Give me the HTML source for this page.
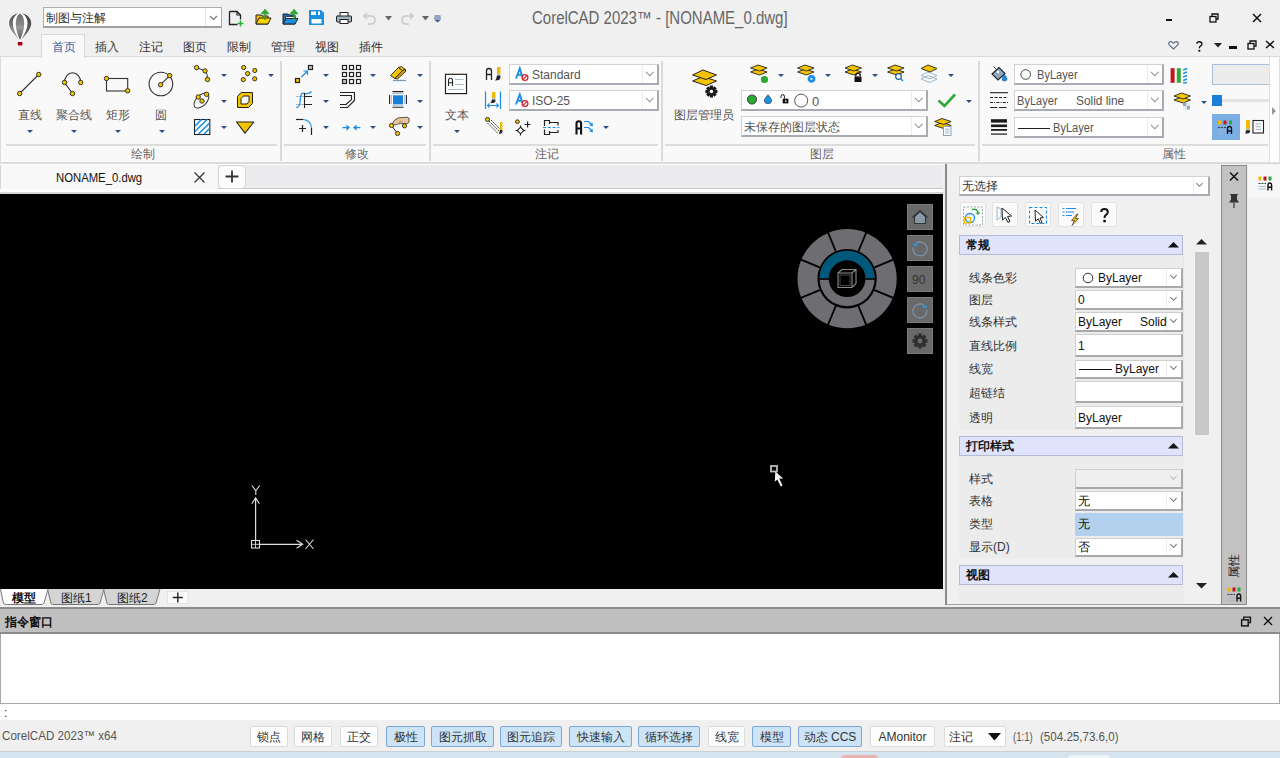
<!DOCTYPE html>
<html><head><meta charset="utf-8">
<style>
*{box-sizing:border-box;margin:0;padding:0}
html,body{width:1280px;height:758px;overflow:hidden;background:#f0f0f0;font-family:"Liberation Sans",sans-serif;font-size:13px;color:#222}
.a{position:absolute}
.t{position:absolute;white-space:nowrap;line-height:1}
svg{position:absolute;overflow:visible}
.dd{position:absolute;width:0;height:0;border-left:3px solid transparent;border-right:3px solid transparent;border-top:3px solid #2e4e8a}
.cb{position:absolute;background:#fff;border:1px solid #d2d2d2;border-right:2px solid #a8abb2;border-bottom:2px solid #a8abb2}
.cbd{position:absolute;width:1px;background:#ececec}
.chev{position:absolute;width:5.5px;height:5.5px;border-right:1px solid #808080;border-bottom:1px solid #808080;transform:rotate(45deg)}
.lbl{position:absolute;white-space:nowrap;line-height:1;color:#555;font-size:11.8px}
.grp{position:absolute;white-space:nowrap;line-height:1;color:#666;font-size:11.8px}

</style></head><body>
<!-- title bar -->
<div class="a" style="left:0;top:0;width:1280px;height:57px;background:#f0f0f0"></div>
<!-- ribbon body -->
<div class="a" style="left:0;top:56px;width:1280px;height:108px;background:#f9f9f9;border-top:1px solid #d9d9d9;border-bottom:2px solid #dcdcdc;border-left:1px solid #dcdcdc"></div>

<!-- logo -->
<svg style="left:8px;top:12px" width="26" height="34" viewBox="0 0 26 34">
<defs><linearGradient id="lg1" x1="0" y1="0" x2="0" y2="1"><stop offset="0" stop-color="#4a4a4a"/><stop offset="1" stop-color="#b0b0b0"/></linearGradient>
<linearGradient id="lg2" x1="0" y1="0" x2="0" y2="1"><stop offset="0" stop-color="#6a6a6a"/><stop offset="0.45" stop-color="#8c8c8c"/><stop offset="0.5" stop-color="#9c9c9c"/><stop offset="1" stop-color="#5a5a5a"/></linearGradient>
<linearGradient id="lg3" x1="0" y1="0" x2="0" y2="1"><stop offset="0" stop-color="#3a3a3a"/><stop offset="1" stop-color="#7a7a7a"/></linearGradient></defs>
<path d="M12 0.8 C5 0.8 0.5 6 0.5 11.5 C0.5 17.5 7 23 11.5 28.5 L12.5 28.5 C17 23 23.8 17.5 23.8 11.5 C23.8 6 19 0.8 12 0.8Z" fill="#fff"/>
<path d="M10.5 1.3 C5 2 1 6.5 1 11.5 C1 16.5 6 22 11.2 28 C7.5 22 4.8 16.5 4.8 11 C4.8 6.5 7 3 10.5 1.3Z" fill="url(#lg1)"/>
<path d="M12 1.5 C9 3 7.8 7.5 7.8 12 C7.8 18 10 23.5 12 28 C14 23.5 16.2 18 16.2 12 C16.2 7.5 15 3 12 1.5Z" fill="url(#lg2)"/>
<path d="M13.8 1.3 C19 2 23.3 6.5 23.3 11.5 C23.3 16.5 18.5 22 13 28 C16.8 22 19.5 16.5 19.5 11 C19.5 6.5 17.5 3 13.8 1.3Z" fill="url(#lg3)"/>
<rect x="9.8" y="30" width="4.6" height="3.4" rx="0.6" fill="#a00010"/>
</svg>
<!-- workspace combo -->
<div class="a" style="left:43px;top:7px;width:179px;height:21px;background:#fff;border:1px solid #adadad;border-bottom:2px solid #a0a0a0"></div>
<div class="a" style="left:205px;top:8px;width:1px;height:18px;background:#e8e8e8"></div>
<svg style="left:209px;top:15px" width="9" height="6"><path d="M1 1 L4.5 4.5 L8 1" stroke="#777" fill="none" stroke-width="1.1"/></svg>
<div class="t" style="left:46px;top:12px;font-size:11.6px;color:#333">制图与注解</div>
<!-- QAT icons -->
<svg style="left:228px;top:10px" width="17" height="17" viewBox="0 0 17 17">
<path d="M1.5 1.5 H9 L12.5 5 V9.5 M9.5 14.5 H1.5 V1.5" fill="none" stroke="#222" stroke-width="1.3"/>
<path d="M9 1.5 V5 H12.5" fill="none" stroke="#222" stroke-width="1.2"/>
<path d="M12.5 10.5 V16.5 M9.5 13.5 H15.5" stroke="#2ea836" stroke-width="1.5"/>
</svg>
<svg style="left:255px;top:9px" width="17" height="17" viewBox="0 0 17 17">
<path d="M1 6 H6 L7 7 H13 V15 H1Z" fill="#f5b800" stroke="#222" stroke-width="1"/>
<path d="M1 15 L4 9 H16 L13 15Z" fill="#ffd200" stroke="#222" stroke-width="1"/>
<path d="M10 11 V3 M7 4.5 L10 1 L13 4.5Z" stroke="#2ea836" fill="#2ea836" stroke-width="1.6"/>
</svg>
<svg style="left:282px;top:9px" width="17" height="17" viewBox="0 0 17 17">
<path d="M1 5 H6 L7 6 H13 V15 H1Z" fill="#1f6fbf" stroke="#222" stroke-width="1"/>
<path d="M3.5 7.5 H13 V12 H3.5Z" fill="#fff" stroke="#222" stroke-width="0.8"/>
<path d="M1 15 L4 9.5 H16 L13 15Z" fill="#1b8fe0" stroke="#222" stroke-width="1"/>
<path d="M12 11 V3 M9 4.5 L12 1 L15 4.5Z" stroke="#2ea836" fill="#2ea836" stroke-width="1.6"/>
</svg>
<svg style="left:309px;top:10px" width="16" height="16" viewBox="0 0 16 16">
<path d="M0 0 H12 L15 3 V15 H0Z" fill="#1b8fe0"/>
<rect x="2" y="1.5" width="5" height="3.5" fill="#fff"/><rect x="9" y="1.5" width="2" height="3.5" fill="#fff"/>
<rect x="2.5" y="9" width="10" height="4.5" fill="#fff"/>
</svg>
<svg style="left:336px;top:12px" width="16" height="12" viewBox="0 0 16 12">
<rect x="4" y="0.5" width="8" height="4" fill="#fff" stroke="#222" stroke-width="1"/>
<path d="M1 4 H15 Q15.5 4 15.5 5 V9 Q15.5 10 14.5 10 H1.5 Q0.5 10 0.5 9 V5 Q0.5 4 1.5 4Z" fill="#9fb3bf" stroke="#222" stroke-width="1"/>
<rect x="4" y="7.5" width="8" height="4" fill="#fff" stroke="#222" stroke-width="1"/>
</svg>
<svg style="left:363px;top:12px" width="13" height="13" viewBox="0 0 13 13">
<path d="M4 1 L1 4 L4 7 M1 4 H8 Q12 4 12 8 Q12 12 8 12 H5" fill="none" stroke="#c8c8c8" stroke-width="1.5"/>
</svg>
<svg style="left:385px;top:16px" width="7" height="5"><path d="M0 0 H7 L3.5 4.5Z" fill="#666"/></svg>
<svg style="left:401px;top:12px" width="13" height="13" viewBox="0 0 13 13">
<path d="M9 1 L12 4 L9 7 M12 4 H5 Q1 4 1 8 Q1 12 5 12 H8" fill="none" stroke="#c8c8c8" stroke-width="1.5"/>
</svg>
<svg style="left:422px;top:16px" width="7" height="5"><path d="M0 0 H7 L3.5 4.5Z" fill="#666"/></svg>
<svg style="left:434px;top:15px" width="7" height="8"><path d="M0.5 1 H6.5" stroke="#3b5a8c" stroke-width="1"/><path d="M0 3 H7" stroke="#3b5a8c" stroke-width="1"/><path d="M0 4.5 H7 L3.5 7.5Z" fill="#3b5a8c"/></svg>
<!-- title -->
<div class="t" style="left:532px;top:10px;font-size:17.5px;color:#666;transform-origin:0 0;transform:scaleX(0.856)">CorelCAD 2023™ - [NONAME_0.dwg]</div>
<!-- window controls -->
<div class="a" style="left:1166px;top:19px;width:6px;height:2px;background:#111"></div>
<svg style="left:1209px;top:13px" width="10" height="10" viewBox="0 0 10 10"><path d="M3 3 V1 H9 V6 H7" fill="none" stroke="#111" stroke-width="1.3"/><rect x="1" y="3.5" width="6" height="5.5" fill="none" stroke="#111" stroke-width="1.3"/></svg>
<svg style="left:1252px;top:13px" width="10" height="10" viewBox="0 0 10 10"><path d="M1 1 L9 9 M9 1 L1 9" stroke="#111" stroke-width="1.5"/></svg>
<!-- row 2 right controls -->
<svg style="left:1168px;top:41px" width="11" height="9" viewBox="0 0 11 9"><path d="M5.5 8 L1.2 3.8 Q0 2.5 1 1.3 Q2.5 0 4 1 L5.5 2.3 L7 1 Q8.5 0 10 1.3 Q11 2.5 9.8 3.8Z" fill="none" stroke="#5a6c80" stroke-width="1.1"/></svg>
<svg style="left:1196px;top:41px" width="7" height="11"><path d="M0.8 2.8 Q0.8 0.7 3.3 0.7 Q5.9 0.7 5.9 2.9 Q5.9 4.3 4.4 5.2 Q3.3 5.9 3.3 7.3" fill="none" stroke="#111" stroke-width="1.4"/><rect x="2.4" y="8.8" width="1.9" height="1.9" fill="#111"/></svg>
<svg style="left:1214px;top:43px" width="8" height="5"><path d="M0 0 H8 L4 4.5Z" fill="#222"/></svg>
<div class="a" style="left:1229px;top:46px;width:8px;height:2.5px;background:#111"></div>
<svg style="left:1247px;top:40px" width="10" height="10" viewBox="0 0 10 10"><path d="M3 3 V1 H9 V6 H7" fill="none" stroke="#111" stroke-width="1.3"/><rect x="1" y="3.5" width="6" height="5.5" fill="none" stroke="#111" stroke-width="1.3"/></svg>
<svg style="left:1265px;top:40px" width="10" height="9" viewBox="0 0 10 9"><path d="M1 1 L9 8 M9 1 L1 8" stroke="#111" stroke-width="1.4"/></svg>
<!-- ribbon tabs -->
<div class="a" style="left:41px;top:34px;width:44px;height:24px;background:#f9f9f9;border:1px solid #d9d9d9;border-bottom:none"></div>
<div class="t" style="left:52px;top:41px;font-size:12px;color:#3a5f9e">首页</div>
<div class="t" style="left:95px;top:41px;font-size:12px;color:#333">插入</div>
<div class="t" style="left:139px;top:41px;font-size:12px;color:#333">注记</div>
<div class="t" style="left:183px;top:41px;font-size:12px;color:#333">图页</div>
<div class="t" style="left:227px;top:41px;font-size:12px;color:#333">限制</div>
<div class="t" style="left:271px;top:41px;font-size:12px;color:#333">管理</div>
<div class="t" style="left:315px;top:41px;font-size:12px;color:#333">视图</div>
<div class="t" style="left:359px;top:41px;font-size:12px;color:#333">插件</div>

<!-- RIBBON -->
<div class="a" style="left:280px;top:61px;width:2px;height:100px;background:#dadada"></div>
<div class="a" style="left:429px;top:61px;width:2px;height:100px;background:#dadada"></div>
<div class="a" style="left:661px;top:61px;width:2px;height:100px;background:#dadada"></div>
<div class="a" style="left:978px;top:61px;width:2px;height:100px;background:#dadada"></div>
<div class="a" style="left:6px;top:144px;width:271px;height:2px;background:#dcdcdc"></div>
<div class="a" style="left:284px;top:144px;width:142px;height:2px;background:#dcdcdc"></div>
<div class="a" style="left:433px;top:144px;width:225px;height:2px;background:#dcdcdc"></div>
<div class="a" style="left:665px;top:144px;width:310px;height:2px;background:#dcdcdc"></div>
<div class="a" style="left:982px;top:144px;width:286px;height:2px;background:#dcdcdc"></div>
<div class="a" style="left:1269px;top:57px;width:11px;height:106px;background:#fdfdfd;border-left:1px solid #dedede;border-right:1px solid #dedede;border-bottom:1px solid #dedede"></div>
<svg style="left:1272px;top:107px" width="5" height="8"><path d="M0 0 L4 4 L0 8Z" fill="#999"/></svg>
<div class="grp" style="left:131px;top:149px">绘制</div>
<div class="grp" style="left:345px;top:149px">修改</div>
<div class="grp" style="left:535px;top:149px">注记</div>
<div class="grp" style="left:810px;top:149px">图层</div>
<div class="grp" style="left:1162px;top:149px">属性</div>
<svg style="left:0;top:0" width="280" height="140"><path d="M19.7 93.5 L38.7 74.5" stroke="#333" stroke-width="1.1"/><circle cx="19.7" cy="93.5" r="2.2" fill="#f5c400" stroke="#222" stroke-width="0.9"/><circle cx="38.7" cy="74.5" r="2.2" fill="#f5c400" stroke="#222" stroke-width="0.9"/><path d="M72.5 93.5 L64.5 82.5 A8.1 9.8 0 0 1 80.7 82.5" stroke="#333" stroke-width="1.1" fill="none"/><circle cx="64.5" cy="82.5" r="2.2" fill="#f5c400" stroke="#222" stroke-width="0.9"/><circle cx="72.5" cy="93.5" r="2.2" fill="#f5c400" stroke="#222" stroke-width="0.9"/><circle cx="80.7" cy="82.5" r="2.2" fill="#f5c400" stroke="#222" stroke-width="0.9"/><rect x="106.5" y="78.5" width="21.2" height="12.5" fill="none" stroke="#333" stroke-width="1.1"/><circle cx="106.5" cy="78.5" r="2.2" fill="#f5c400" stroke="#222" stroke-width="0.9"/><circle cx="127.7" cy="90.8" r="2.2" fill="#f5c400" stroke="#222" stroke-width="0.9"/><circle cx="160.9" cy="84" r="11.8" fill="none" stroke="#333" stroke-width="1.1"/><path d="M160.6 84.7 L169.7 75.6" stroke="#333" stroke-width="1.1"/><circle cx="160.6" cy="84.7" r="2.2" fill="#f5c400" stroke="#222" stroke-width="0.9"/><circle cx="169.7" cy="75.6" r="2.2" fill="#f5c400" stroke="#222" stroke-width="0.9"/><path d="M196.6 67.6 L205 70.9 Q208 74 207.5 79.5" stroke="#333" stroke-width="1" fill="none"/><circle cx="196.6" cy="67.6" r="2.2" fill="#f5c400" stroke="#222" stroke-width="0.9"/><circle cx="205" cy="70.9" r="2.2" fill="#f5c400" stroke="#222" stroke-width="0.9"/><circle cx="207.5" cy="79.5" r="2.2" fill="#f5c400" stroke="#222" stroke-width="0.9"/><circle cx="243.7" cy="67.5" r="2.1" fill="#f5c400" stroke="#222" stroke-width="0.9"/><circle cx="254.8" cy="70.5" r="2.1" fill="#f5c400" stroke="#222" stroke-width="0.9"/><circle cx="247.6" cy="73.6" r="2.1" fill="#f5c400" stroke="#222" stroke-width="0.9"/><circle cx="243.3" cy="79.6" r="2.1" fill="#f5c400" stroke="#222" stroke-width="0.9"/><circle cx="254.7" cy="78.8" r="2.1" fill="#f5c400" stroke="#222" stroke-width="0.9"/><ellipse cx="201.4" cy="100.6" rx="9.2" ry="5.2" transform="rotate(-45 201.4 100.6)" fill="none" stroke="#333" stroke-width="1"/><circle cx="198.2" cy="97" r="2.2" fill="#f5c400" stroke="#222" stroke-width="0.9"/><circle cx="206.6" cy="94.3" r="2.2" fill="#f5c400" stroke="#222" stroke-width="0.9"/><circle cx="202" cy="101" r="2.2" fill="#f5c400" stroke="#222" stroke-width="0.9"/><path d="M241 92.5 H252.5 V103.5 L248.5 107.5 H237.5 V96.5Z M243.5 96 H249 V101.5 L247 104 H241 V98.5Z" fill="#f5c400" fill-rule="evenodd" stroke="#222" stroke-width="1"/><rect x="194.5" y="119.5" width="15.3" height="15" fill="#fff" stroke="#222" stroke-width="1.1"/><path d="M195 126 L201.5 119.5 M195 131.5 L207 119.5 M198.5 134 L209.3 123.3 M204 134 L209.3 128.7" stroke="#1a8fe3" stroke-width="1.6"/><path d="M236.5 122 H253.8 L245 133.2Z" fill="#f5c400" stroke="#222" stroke-width="1.1" stroke-linejoin="round"/></svg>
<div class="lbl" style="left:18px;top:110px">直线</div>
<div class="lbl" style="left:56px;top:110px">聚合线</div>
<div class="lbl" style="left:106px;top:110px">矩形</div>
<div class="lbl" style="left:155px;top:110px">圆</div>
<div class="dd" style="left:27px;top:130px"></div>
<div class="dd" style="left:71px;top:130px"></div>
<div class="dd" style="left:115px;top:130px"></div>
<div class="dd" style="left:159px;top:130px"></div>
<div class="dd" style="left:221px;top:74px"></div>
<div class="dd" style="left:268px;top:74px"></div>
<div class="dd" style="left:221px;top:100px"></div>
<div class="dd" style="left:221px;top:126px"></div>
<svg style="left:0;top:0" width="430" height="140"><rect x="295.5" y="78.5" width="4" height="4" fill="#f5c400" stroke="#222" stroke-width="1.2"/><rect x="308.5" y="65.5" width="4" height="4" fill="#b9cdd6" stroke="#222" stroke-width="1.2"/><path d="M301.5 77 L307 71.5 M303.5 71 H307.5 V75" stroke="#1a8fe3" stroke-width="1.2" fill="none"/><rect x="342.5" y="65.5" width="4" height="4" fill="#fff" stroke="#222" stroke-width="1.2"/><rect x="349.5" y="65.5" width="4" height="4" fill="#fff" stroke="#222" stroke-width="1.2"/><rect x="356.5" y="65.5" width="4" height="4" fill="#fff" stroke="#222" stroke-width="1.2"/><rect x="342.5" y="72.5" width="4" height="4" fill="#fff" stroke="#222" stroke-width="1.2"/><rect x="349.5" y="72.5" width="4" height="4" fill="#fff" stroke="#222" stroke-width="1.2"/><rect x="356.5" y="72.5" width="4" height="4" fill="#fff" stroke="#222" stroke-width="1.2"/><rect x="342.5" y="79.5" width="4" height="4" fill="#b9cdd6" stroke="#222" stroke-width="1.2"/><rect x="349.5" y="79.5" width="4" height="4" fill="#fff" stroke="#222" stroke-width="1.2"/><rect x="356.5" y="79.5" width="4" height="4" fill="#fff" stroke="#222" stroke-width="1.2"/><path d="M390.5 75.5 L398.5 67.5 L402.5 70.5 L395 78.5Z" fill="#f5c400" stroke="#222" stroke-width="0.9" stroke-linejoin="round"/><path d="M398.5 67.5 L401.5 66.5 L405.5 69.5 L402.5 70.5Z" fill="#f5c400" stroke="#222" stroke-width="0.9" stroke-linejoin="round"/><path d="M402.5 70.5 L405.5 69.5 L405.5 71.5 L397.5 79 L395 78.5Z" fill="#d9a300" stroke="#222" stroke-width="0.9" stroke-linejoin="round"/><path d="M393 80.5 H406" stroke="#7d9ab3" stroke-width="1.3"/><path d="M296 96.5 H304 M296 104.5 H304" stroke="#a8bccb" stroke-width="1"/><path d="M296 107.5 Q299.5 107.5 300 102 Q300.5 95 302 93.5 Q303.5 92.5 306 93.8 Q309 94 311.5 91.5" stroke="#1a8fe3" stroke-width="1.2" fill="none"/><path d="M304.5 93 V108 M304.5 96.5 H312 M304.5 104.5 H312" stroke="#222" stroke-width="1.1" fill="none"/><path d="M340 92.5 H354.5 V100.5 L347.5 107.5 H340 M340 95.5 H351.5 V99.5 L346 104.5 H340" stroke="#222" stroke-width="1.1" fill="none"/><path d="M392.5 91.6 H403.5 M392.5 107.2 H403.5 M389.6 95 V104 M406.4 95 V104" stroke="#222" stroke-width="1.1"/><path d="M392.5 93.5 H403.5 M392.5 105.3 H403.5 M391.5 95 V104 M404.5 95 V104" stroke="#9ab6cf" stroke-width="0.8"/><rect x="393" y="95.3" width="10" height="9" fill="#1a7fd6"/><path d="M296 119.5 H303 Q311 120 311.5 128" stroke="#1a8fe3" stroke-width="1.2" fill="none"/><path d="M296 119.5 H303" stroke="#222" stroke-width="1.2"/><path d="M311.5 128 V135" stroke="#222" stroke-width="1.2"/><path d="M299 128.5 H306 M302.5 125 V132" stroke="#222" stroke-width="1.2"/><path d="M342.5 127.6 H348 M360.5 127.6 H355" stroke="#1a8fe3" stroke-width="1.3"/><path d="M346.5 124.5 L350 127.6 L346.5 130.7Z M356.5 124.5 L353 127.6 L356.5 130.7Z" fill="#1a8fe3"/><path d="M391.5 125.5 L397.5 133.5" stroke="#333" stroke-width="1"/><path d="M392 124.5 Q393.5 119.5 398.5 117.8 L407 117.2 Q409.6 117.6 409.2 120 L408.8 122.6 Q407.5 124 404.5 123.6 L400.5 123.6 Q397.5 124 395 125Z" fill="#e8c49a" stroke="#333" stroke-width="0.8"/><path d="M399 121.5 L403 121.3 M398.5 123 L401 123" stroke="#a08060" stroke-width="0.6"/><circle cx="391.5" cy="125.5" r="2.1" fill="#f5c400" stroke="#222" stroke-width="0.9"/><circle cx="404.5" cy="125.8" r="2.1" fill="#f5c400" stroke="#222" stroke-width="0.9"/><circle cx="397.5" cy="133.5" r="2.1" fill="#f5c400" stroke="#222" stroke-width="0.9"/></svg>
<div class="dd" style="left:323px;top:74px"></div>
<div class="dd" style="left:370px;top:74px"></div>
<div class="dd" style="left:417px;top:74px"></div>
<div class="dd" style="left:323px;top:100px"></div>
<div class="dd" style="left:417px;top:100px"></div>
<div class="dd" style="left:323px;top:126px"></div>
<div class="dd" style="left:370px;top:126px"></div>
<div class="dd" style="left:417px;top:126px"></div>
<svg style="left:0;top:0" width="662" height="140"><rect x="445.5" y="74.3" width="21" height="19.3" fill="#fff" stroke="#222" stroke-width="1.2"/><path d="M448.5 86 V80.3 Q448.5 78.3 450.5 78.3 Q452.5 78.3 452.5 80.3 V86 M448.5 82.8 H452.5" stroke="#222" stroke-width="1.1" fill="none"/><path d="M455 79.5 H463.5 M455 84.5 H463.5 M448 89.5 H463.5" stroke="#9bb8c8" stroke-width="0.9"/><path d="M486.5 80 V71 Q486.5 68.5 489 68.5 Q491.5 68.5 491.5 71 V80 M486.5 74.5 H491.5" stroke="#222" stroke-width="1.3" fill="none"/><rect x="497" y="67" width="3.4" height="7" fill="#f5b800"/><rect x="497" y="74" width="3.4" height="1.5" fill="#a8c8d8"/><path d="M497 75.5 H500.4 V78 Q500 80.5 495 80.5 Q496.5 79 497 75.5Z" fill="#222"/><path d="M485.5 91.5 V109 M500.5 91.5 V109" stroke="#1a8fe3" stroke-width="1.2"/><path d="M487.5 105.5 H498.5 M489.5 103.5 L487.5 105.5 L489.5 107.5 M496.5 103.5 L498.5 105.5 L496.5 107.5" stroke="#1a8fe3" stroke-width="1.1" fill="none"/><rect x="492" y="92" width="3.4" height="6" fill="#f5b800"/><rect x="492" y="98" width="3.4" height="1.4" fill="#a8c8d8"/><path d="M492 99.4 H495.4 V101.5 Q495 103 490 103 Q491.5 102 492 99.4Z" fill="#222"/><path d="M489 121 L499 131 M491 120 L500 129 M487.5 123 L497.5 133" stroke="#222" stroke-width="0.9" stroke-dasharray="2 1"/><circle cx="487.5" cy="119.5" r="2" fill="#f5c400" stroke="#222" stroke-width="0.9"/><rect x="500" y="122" width="2.4" height="8" fill="#f5b800"/><path d="M500 130 H502.4 V132 Q502 134 499 134Z" fill="#222"/><circle cx="517.4" cy="121.7" r="1.9" fill="#f5b800" stroke="#222" stroke-width="0.9"/><path d="M527.6 121.5 V127.5 M524.6 124.5 H530.6" stroke="#222" stroke-width="1.2"/><path d="M520.5 127.2 L523.8 130.5 L520.5 133.8 L517.2 130.5Z" fill="#fff" stroke="#222" stroke-width="1.1"/><path d="M520.5 125.5 V127.2 M520.5 133.8 V135.5 M515.5 130.5 H517.2 M523.8 130.5 H525.5" stroke="#222" stroke-width="1.1"/><path d="M544.5 126 V120.5 H549.5 V124 M549.5 122.5 H558 V125.5" stroke="#222" stroke-width="1.2" fill="none"/><path d="M543 127.5 H559.5" stroke="#1a8fe3" stroke-width="1.1" stroke-dasharray="3 1.8"/><path d="M544.5 129.5 V134.5 H549.5 V131 M549.5 132.5 H558 V130" stroke="#222" stroke-width="1.2" fill="none"/><path d="M576.5 134.5 V123.5 Q576.5 121.2 578.8 121.2 Q581.1 121.2 581.1 123.5 V134.5 M576.5 128.5 H581.1" stroke="#111" stroke-width="2.1" fill="none"/><path d="M584 121.5 H588.5 L592 125 M584 127.5 H588.5 L592 131" stroke="#1a8fe3" stroke-width="1.2" fill="none"/><path d="M589.2 125.6 L593 126.3 L592.4 122.5Z M589.2 131.6 L593 132.3 L592.4 128.5Z" fill="#1a8fe3"/></svg>
<div class="lbl" style="left:445px;top:110px">文本</div>
<div class="dd" style="left:454px;top:130px"></div>
<div class="dd" style="left:603px;top:126px"></div>
<div class="cb" style="left:509px;top:64px;width:150px;height:21px"></div><div class="cbd" style="left:642px;top:65px;height:18px"></div><div class="chev" style="left:647px;top:69px"></div>
<div class="cb" style="left:509px;top:90px;width:150px;height:21px"></div><div class="cbd" style="left:642px;top:91px;height:18px"></div><div class="chev" style="left:647px;top:95px"></div>
<svg style="left:515px;top:67px" width="14" height="14" viewBox="0 0 14 14"><path d="M1 11.5 L4.8 1.5 L7.5 10 M2.4 7.8 H6.8" stroke="#1a8fe3" stroke-width="1.9" fill="none"/><circle cx="10" cy="10.5" r="2.9" fill="#fff" stroke="#d0202a" stroke-width="1.3"/><path d="M8.2 12.3 L11.8 8.7" stroke="#d0202a" stroke-width="1.2"/></svg>
<svg style="left:515px;top:93px" width="14" height="14" viewBox="0 0 14 14"><path d="M1 11.5 L4.8 1.5 L7.5 10 M2.4 7.8 H6.8" stroke="#1a8fe3" stroke-width="1.9" fill="none"/><circle cx="10" cy="10.5" r="2.9" fill="#fff" stroke="#d0202a" stroke-width="1.3"/><path d="M8.2 12.3 L11.8 8.7" stroke="#d0202a" stroke-width="1.2"/></svg>
<div class="t" style="left:532px;top:69px;font-size:12.5px;color:#555;transform-origin:0 0;transform:scaleX(0.96)">Standard</div>
<div class="t" style="left:532px;top:95px;font-size:12.5px;color:#555;transform-origin:0 0;transform:scaleX(0.96)">ISO-25</div>
<svg style="left:0;top:0" width="980" height="140"><path d="M692.6 81 L703 76.5 L716.5 81 L706 85.5Z" fill="#f5c400" stroke="#222" stroke-width="1"/><path d="M692.6 75 L703 70 L716.5 75 L706 79.5Z" fill="#f5c400" stroke="#222" stroke-width="1"/><g transform="translate(711.4 91.5)"><rect x="-1.6" y="-6" width="3.2" height="12" fill="#1a1a1a" transform="rotate(0)"/><rect x="-1.6" y="-6" width="3.2" height="12" fill="#1a1a1a" transform="rotate(45)"/><rect x="-1.6" y="-6" width="3.2" height="12" fill="#1a1a1a" transform="rotate(90)"/><rect x="-1.6" y="-6" width="3.2" height="12" fill="#1a1a1a" transform="rotate(135)"/><circle r="4.32" fill="#1a1a1a"/><circle r="1.7999999999999998" fill="#fff"/></g><path d="M750.6 72.0 L758.025 69.0 L767.1 72.0 L759.6750000000001 75.0Z" fill="#f5c400" stroke="#222" stroke-width="0.9"/><path d="M750.6 68.0 L758.025 65 L767.1 68.0 L759.6750000000001 71.0Z" fill="#f5c400" stroke="#222" stroke-width="0.9"/><circle cx="764.5" cy="79.5" r="3.6" fill="#2ea836"/><path d="M797.5 72.0 L804.925 69.0 L814.0 72.0 L806.575 75.0Z" fill="#f5c400" stroke="#222" stroke-width="0.9"/><path d="M797.5 68.0 L804.925 65 L814.0 68.0 L806.575 71.0Z" fill="#f5c400" stroke="#222" stroke-width="0.9"/><g transform="translate(811.5 78.8)"><rect x="-1.6" y="-3.8" width="3.2" height="7.6" fill="#1a8fe3" transform="rotate(0)"/><rect x="-1.6" y="-3.8" width="3.2" height="7.6" fill="#1a8fe3" transform="rotate(45)"/><rect x="-1.6" y="-3.8" width="3.2" height="7.6" fill="#1a8fe3" transform="rotate(90)"/><rect x="-1.6" y="-3.8" width="3.2" height="7.6" fill="#1a8fe3" transform="rotate(135)"/><circle r="2.7359999999999998" fill="#1a8fe3"/><circle r="1.14" fill="#fff"/></g><path d="M845 72.0 L852.425 69.0 L861.5 72.0 L854.075 75.0Z" fill="#f5c400" stroke="#222" stroke-width="0.9"/><path d="M845 68.0 L852.425 65 L861.5 68.0 L854.075 71.0Z" fill="#f5c400" stroke="#222" stroke-width="0.9"/><rect x="854.5" y="76.5" width="7" height="5.5" fill="#111"/><path d="M855.8 76.5 V74.5 Q858 71.5 860.2 74.5 V76.5" stroke="#111" stroke-width="1.3" fill="none"/><path d="M887.6 72.0 L895.025 69.0 L904.1 72.0 L896.6750000000001 75.0Z" fill="#f5c400" stroke="#222" stroke-width="0.9"/><path d="M887.6 68.0 L895.025 65 L904.1 68.0 L896.6750000000001 71.0Z" fill="#f5c400" stroke="#222" stroke-width="0.9"/><circle cx="898.5" cy="76.5" r="2.8" fill="#fff" stroke="#1f5f9f" stroke-width="1.2"/><path d="M900.5 78.5 L903 81" stroke="#1a8fe3" stroke-width="1.4"/><path d="M921 75.5 L928 72 L937 75.5 L930 79Z M921 79 L928 75.5 L937 79 L930 82.5Z" fill="none" stroke="#8fb0cc" stroke-width="0.9"/><path d="M921 68.5 L928 65 L937 68.5 L930 72Z" fill="#f5c400" stroke="#222" stroke-width="0.9"/><path d="M938.5 100.5 L944.5 106 L955 94.5" stroke="#2ea836" stroke-width="2.6" fill="none"/><path d="M934.6 125.5 L942.025 122.5 L951.1 125.5 L943.6750000000001 128.5Z" fill="#f5c400" stroke="#222" stroke-width="0.9"/><path d="M934.6 121.5 L942.025 118.5 L951.1 121.5 L943.6750000000001 124.5Z" fill="#f5c400" stroke="#222" stroke-width="0.9"/><rect x="943.5" y="126.5" width="7.5" height="9" fill="#fff" stroke="#7d9ab3" stroke-width="0.9"/><path d="M945 129 H949.5 M945 131 H949.5 M945 133 H949.5" stroke="#7d9ab3" stroke-width="0.7"/><circle cx="752" cy="99.2" r="4.6" fill="#2ea836" stroke="#222" stroke-width="0.8"/><path d="M768 94.7 Q764.3 99 764.3 100.3 Q764.3 103.8 768 103.8 Q771.7 103.8 771.7 100.3 Q771.7 99 768 94.7Z" fill="#1a8fe3" stroke="#333" stroke-width="0.6"/><rect x="782.7" y="98.7" width="5.7" height="4.7" fill="#111"/><rect x="785" y="100.4" width="1.4" height="1.4" fill="#fff"/><path d="M781 98 V96.3 Q781 94.6 782.7 94.6 Q784.4 94.6 784.4 96.3 V98.7" stroke="#111" stroke-width="1" fill="none"/><circle cx="801.2" cy="100.6" r="6.5" fill="#fff" stroke="#555" stroke-width="1"/></svg>
<div class="lbl" style="left:674px;top:110px">图层管理员</div>
<div class="dd" style="left:778px;top:74px"></div>
<div class="dd" style="left:825px;top:74px"></div>
<div class="dd" style="left:872px;top:74px"></div>
<div class="dd" style="left:948px;top:74px"></div>
<div class="dd" style="left:966px;top:100px"></div>
<div class="cb" style="left:741px;top:90px;width:187px;height:21px"></div><div class="cbd" style="left:911px;top:91px;height:18px"></div><div class="chev" style="left:916px;top:95px"></div>
<div class="cb" style="left:741px;top:116px;width:187px;height:21px"></div><div class="cbd" style="left:911px;top:117px;height:18px"></div><div class="chev" style="left:916px;top:121px"></div>
<svg style="left:0;top:0" width="980" height="140"><circle cx="752" cy="99.5" r="4.6" fill="#2ea836" stroke="#222" stroke-width="0.8"/><path d="M768 94.7 Q764.3 99 764.3 100.3 Q764.3 103.8 768 103.8 Q771.7 103.8 771.7 100.3 Q771.7 99 768 94.7Z" fill="#1a8fe3" stroke="#333" stroke-width="0.6"/><rect x="782.7" y="98.7" width="5.7" height="4.7" fill="#111"/><rect x="785" y="100.4" width="1.4" height="1.4" fill="#fff"/><path d="M781 98 V96.3 Q781 94.6 782.7 94.6 Q784.4 94.6 784.4 96.3 V98.7" stroke="#111" stroke-width="1" fill="none"/><circle cx="801.2" cy="100.6" r="6.5" fill="#fff" stroke="#555" stroke-width="1"/></svg>
<div class="t" style="left:812px;top:95px;font-size:13px;color:#555">0</div>
<div class="t" style="left:744px;top:121px;font-size:12px;color:#555">未保存的图层状态</div>
<div class="cb" style="left:1014px;top:64px;width:150px;height:21px"></div><div class="cbd" style="left:1147px;top:65px;height:18px"></div><div class="chev" style="left:1152px;top:69px"></div>
<div class="cb" style="left:1014px;top:90px;width:150px;height:21px"></div><div class="cbd" style="left:1147px;top:91px;height:18px"></div><div class="chev" style="left:1152px;top:95px"></div>
<div class="cb" style="left:1014px;top:117px;width:150px;height:21px"></div><div class="cbd" style="left:1147px;top:118px;height:18px"></div><div class="chev" style="left:1152px;top:122px"></div>
<svg style="left:0;top:0" width="1280" height="140"><path d="M992 74 L999 67.5 L1005 73.5 L998 80Z" fill="#8fa8c0" stroke="#222" stroke-width="1.1"/><circle cx="998" cy="72" r="1.3" fill="#fff"/><path d="M996 69 L993.5 66.5" stroke="#222" stroke-width="0.9"/><path d="M1004.5 74.5 Q1002 78 1002 79 Q1002 81 1004.5 81 Q1007 81 1007 79 Q1007 78 1004.5 74.5Z" fill="#1a8fe3" stroke="#1a4f8f" stroke-width="0.6"/><circle cx="1025.7" cy="74.5" r="4.8" fill="none" stroke="#444" stroke-width="1"/><path d="M990 92.7 H1008" stroke="#222" stroke-width="1.1"/><path d="M990 97.5 H1008" stroke="#222" stroke-width="1.1" stroke-dasharray="3 1.5 3 1.5"/><path d="M990 102.5 H1008" stroke="#222" stroke-width="1.1" stroke-dasharray="3 1.2 1 1.2"/><path d="M990 107.5 H1008" stroke="#222" stroke-width="1.1" stroke-dasharray="7.5 1.5"/><rect x="991" y="119.2" width="16" height="3.4" fill="#1a1a1a"/><rect x="991" y="124.5" width="16" height="2.6" fill="#1a1a1a"/><rect x="991" y="129" width="16" height="1.8" fill="#1a1a1a"/><rect x="991" y="133.5" width="16" height="1.2" fill="#1a1a1a"/><path d="M1018 128.5 H1050" stroke="#222" stroke-width="1"/><rect x="1170.6" y="68.2" width="4" height="14.6" fill="#c0141e"/><rect x="1176.8" y="68.2" width="4" height="14.6" fill="#2ea836"/><path d="M1183.2 70 L1187 68.5 M1183.2 73.5 L1187 72 M1183.2 77 L1187 75.5 M1183.2 80.5 L1187 79 M1183.2 83 L1187 82.5" stroke="#1a8fe3" stroke-width="1.4"/><path d="M1174 100.0 L1181.425 97.0 L1190.5 100.0 L1183.075 103.0Z" fill="#f5c400" stroke="#222" stroke-width="0.9"/><path d="M1174 96.0 L1181.425 93 L1190.5 96.0 L1183.075 99.0Z" fill="#f5c400" stroke="#222" stroke-width="0.9"/><rect x="1183" y="102.5" width="3.5" height="3.5" fill="#8fa8c0"/><rect x="1186.5" y="106" width="3.5" height="3.5" fill="#8fa8c0"/><rect x="1186.5" y="102.5" width="3.5" height="3.5" fill="#e8e8e8"/><rect x="1183" y="106" width="3.5" height="3.5" fill="#e8e8e8"/></svg>
<div class="dd" style="left:1201px;top:101px"></div>
<div class="a" style="left:1212px;top:64px;width:57px;height:21px;background:#ececec;border:1.5px solid #a9c2dc;border-right:none"></div>
<div class="a" style="left:1222px;top:99px;width:47px;height:3px;background:#e3e3e3"></div>
<div class="a" style="left:1212px;top:95px;width:10px;height:11px;background:#1a7fd6"></div>
<div class="a" style="left:1212px;top:114px;width:28px;height:26px;background:#7aaee4"></div>
<svg style="left:0;top:0" width="1280" height="140"><rect x="1218" y="120.5" width="3" height="4" fill="#f5b800"/><rect x="1223.5" y="120.5" width="3" height="4" fill="#c0141e"/><rect x="1229" y="120.5" width="3" height="4" fill="#2ea836"/><path d="M1218 127.5 H1226" stroke="#222" stroke-width="0.8" stroke-dasharray="2 1"/><path d="M1218 130.5 H1226 M1218 133 H1226" stroke="#9ab6cf" stroke-width="0.8"/><path d="M1227.5 134 V128.5 Q1227.5 126.5 1229.5 126.5 Q1231.5 126.5 1231.5 128.5 V134 M1227.5 131 H1231.5" stroke="#111" stroke-width="1.3" fill="none"/><rect x="1246" y="120" width="4" height="9" fill="#f5b800"/><rect x="1246" y="129" width="4" height="1.2" fill="#a8c8d8"/><path d="M1246 130.2 H1250 V132 Q1249.5 133.5 1245 133.5 Q1246 132.5 1246 130.2Z" fill="#222"/><rect x="1253" y="120.5" width="10.5" height="12.5" fill="#fff" stroke="#222" stroke-width="1.1"/><path d="M1255.5 124 H1261 M1255.5 126.7 H1261 M1255.5 129.4 H1261" stroke="#7d9ab3" stroke-width="0.8"/></svg>
<div class="t" style="left:1037px;top:69px;font-size:12.5px;color:#555;transform-origin:0 0;transform:scaleX(0.885)">ByLayer</div>
<div class="t" style="left:1017px;top:95px;font-size:12.5px;color:#555;transform-origin:0 0;transform:scaleX(0.885)">ByLayer</div>
<div class="t" style="left:1076px;top:95px;font-size:12.5px;color:#555;transform-origin:0 0;transform:scaleX(0.95)">Solid line</div>
<div class="t" style="left:1053px;top:122px;font-size:12.5px;color:#555;transform-origin:0 0;transform:scaleX(0.885)">ByLayer</div>
<!-- /RIBBON2 -->
<div class="a" style="left:0;top:164px;width:944px;height:30px;background:#fff"></div>
<div class="a" style="left:0;top:165px;width:943px;height:24px;background:#ececef;border-bottom:1px solid #cacaca"></div>
<div class="a" style="left:0;top:165px;width:218px;height:24px;background:#f8f8f8;border-left:1px solid #d6d6d6"></div>
<div class="a" style="left:218px;top:165px;width:28px;height:24px;background:#fcfcfc;border:1px solid #d2d2d2;border-radius:4px"></div>
<div class="a" style="left:0;top:192px;width:943px;height:2px;background:#d6d6d6"></div>
<div class="t" style="left:56px;top:172px;font-size:12.5px;color:#111;transform-origin:0 0;transform:scaleX(0.905)">NONAME_0.dwg</div>
<svg style="left:194px;top:172px" width="11" height="11"><path d="M0.5 0.5 L10.5 10.5 M10.5 0.5 L0.5 10.5" stroke="#333" stroke-width="1.2"/></svg>
<svg style="left:225px;top:170px" width="14" height="13"><path d="M7 0.5 V12.5 M0.5 6.5 H13.5" stroke="#333" stroke-width="1.8"/></svg>
<div class="a" style="left:943px;top:164px;width:2px;height:441px;background:#f0f0f0"></div>
<div class="a" style="left:0;top:194px;width:943px;height:395px;background:#000"></div>
<svg style="left:0;top:0" width="943" height="589"><circle cx="847.1" cy="278.7" r="49.6" fill="#6e6e72"/><path d="M858.47 251.26 L866.46 231.95" stroke="#000" stroke-width="1.8"/><path d="M874.54 267.33 L893.85 259.34" stroke="#000" stroke-width="1.8"/><path d="M874.54 290.07 L893.85 298.06" stroke="#000" stroke-width="1.8"/><path d="M858.47 306.14 L866.46 325.45" stroke="#000" stroke-width="1.8"/><path d="M835.73 306.14 L827.74 325.45" stroke="#000" stroke-width="1.8"/><path d="M819.66 290.07 L800.35 298.06" stroke="#000" stroke-width="1.8"/><path d="M819.66 267.33 L800.35 259.34" stroke="#000" stroke-width="1.8"/><path d="M835.73 251.26 L827.74 231.95" stroke="#000" stroke-width="1.8"/><circle cx="847.1" cy="278.7" r="29.7" fill="#000"/><circle cx="847.1" cy="278.7" r="27.5" fill="#6e6e72"/><path d="M819.6 278.2 A27.5 27.5 0 0 1 874.6 278.2Z" fill="#00587a"/><rect x="819.1" y="278.2" width="56" height="1.6" fill="#000"/><circle cx="847.1" cy="278.7" r="18.4" fill="#000"/><path d="M838 273 L842 269.5 H856 V283.5 L852 287.5 H838Z M838 273 H852 V287.5 M852 273 L856 269.5" fill="none" stroke="#8a8a8a" stroke-width="1.1"/><rect x="840" y="275" width="10" height="10.5" fill="none" stroke="#444" stroke-width="1"/></svg>
<div class="a" style="left:907px;top:204px;width:26px;height:26px;background:#696969;border:1px solid #7a7a7a"></div>
<div class="a" style="left:907px;top:235px;width:26px;height:26px;background:#696969;border:1px solid #7a7a7a"></div>
<div class="a" style="left:907px;top:266px;width:26px;height:26px;background:#696969;border:1px solid #7a7a7a"></div>
<div class="a" style="left:907px;top:297px;width:26px;height:26px;background:#696969;border:1px solid #7a7a7a"></div>
<div class="a" style="left:907px;top:328px;width:26px;height:26px;background:#696969;border:1px solid #7a7a7a"></div>
<svg style="left:910px;top:207px" width="20" height="20"><path d="M2.5 10.5 L10 3.5 L17.5 10.5" fill="none" stroke="#333" stroke-width="1.2"/><path d="M4.5 9.5 L10 4.5 L15.5 9.5 V16.5 H4.5Z" fill="#8a9aa8" stroke="#333" stroke-width="1.1"/></svg>
<svg style="left:910px;top:238px" width="20" height="20"><path d="M6 5.2 A7 7 0 1 1 3.2 9.5" fill="none" stroke="#7f98b0" stroke-width="1.1"/><path d="M2.2 6.2 L7.8 4.2 L6.8 9.2Z" fill="#3a8fcf"/></svg>
<div class="t" style="left:912px;top:273px;font-size:13px;color:#333;transform-origin:0 0;transform:scaleX(0.92)">90</div>
<svg style="left:910px;top:300px" width="20" height="20"><path d="M14 5.2 A7 7 0 1 0 16.8 9.5" fill="none" stroke="#7f98b0" stroke-width="1.1"/><path d="M17.8 6.2 L12.2 4.2 L13.2 9.2Z" fill="#3a8fcf"/></svg>
<svg style="left:910px;top:331px" width="20" height="20"><g transform="translate(10 10)"><rect x="-1.8" y="-7.5" width="3.6" height="15" fill="#2f2f2f" transform="rotate(0)"/><rect x="-1.8" y="-7.5" width="3.6" height="15" fill="#2f2f2f" transform="rotate(45)"/><rect x="-1.8" y="-7.5" width="3.6" height="15" fill="#2f2f2f" transform="rotate(90)"/><rect x="-1.8" y="-7.5" width="3.6" height="15" fill="#2f2f2f" transform="rotate(135)"/><circle r="5.6" fill="#2f2f2f"/><circle r="2.4" fill="#6a6a6a"/></g></svg>
<svg style="left:0;top:0" width="943" height="589"><path d="M255.6 540 V497.8 M251.8 503.8 L255.6 497.8 L259.4 503.8 M260 544.3 H302.6 M296.6 540.3 L302.6 544.3 L296.6 548.3" fill="none" stroke="#ddd" stroke-width="1.2"/><rect x="251.5" y="540.5" width="8" height="7.5" fill="none" stroke="#ddd" stroke-width="1.1"/><path d="M255.5 540.5 V548 M251.5 544.3 H259.5" stroke="#ddd" stroke-width="0.9"/><path d="M251.8 485.5 L255.8 490.5 L259.8 485.5 M255.8 490.5 V495" fill="none" stroke="#ddd" stroke-width="1.1"/><path d="M305.5 539.5 L313.5 549 M313.5 539.5 L305.5 549" fill="none" stroke="#ddd" stroke-width="1.1"/><rect x="771" y="466" width="6" height="5.5" fill="none" stroke="#bbb" stroke-width="1.8"/><path d="M775.3 471.5 L774.8 481.8 L777.3 479.5 L780.8 486.5 L782.5 485.5 L779.2 478.6 L783.2 478.4Z" fill="#f4f4f4"/></svg>
<div class="a" style="left:0;top:589px;width:944px;height:16px;background:#f0f0f0"></div>
<svg style="left:0;top:589px" width="200" height="16"><path d="M103.5 0 L107 14.5 Q108 15.5 110 15.5 H153 Q155 15.5 156 14 L160 0" fill="#d4d4d4" stroke="#6a6a6a" stroke-width="0.9"/><path d="M47.5 0 L51 14.5 Q52 15.5 54 15.5 H97 Q99 15.5 100 14 L104 0" fill="#d4d4d4" stroke="#6a6a6a" stroke-width="0.9"/><path d="M0.5 0 L3.5 14.5 Q4.5 15.5 6.5 15.5 H41 Q43 15.5 44 14 L48 0" fill="#fff" stroke="#6a6a6a" stroke-width="0.9"/><rect x="167.5" y="2.5" width="20.5" height="12" fill="#fafafa" stroke="#e0e0e0" stroke-width="0.8"/><path d="M177.8 3.5 V13.5 M172.8 8.5 H182.8" stroke="#222" stroke-width="1.4"/></svg>
<div class="t" style="left:12px;top:592px;font-size:12px;font-weight:bold;color:#111">模型</div>
<div class="t" style="left:61px;top:592px;font-size:12px;color:#222">图纸1</div>
<div class="t" style="left:117px;top:592px;font-size:12px;color:#222">图纸2</div>
<div class="a" style="left:0;top:605px;width:945px;height:3px;background:#f0f0f0"></div>
<div class="a" style="left:945px;top:164px;width:2px;height:441px;background:#8a8a8a"></div>
<div class="a" style="left:947px;top:165px;width:274px;height:440px;background:#f0f0f0;border-bottom:1px solid #a5a5a5"></div>
<div class="a" style="left:1221px;top:165px;width:26px;height:440px;background:#c2c2c2;border:1px solid #8c8c8c"></div>
<svg style="left:1229px;top:172px" width="10" height="9"><path d="M1 0.5 L9 8.5 M9 0.5 L1 8.5" stroke="#111" stroke-width="1.5"/></svg>
<svg style="left:1228px;top:193px" width="12" height="15"><path d="M1.5 1 H10.5 L9 2.5 V6.5 L11 9.5 H1 L3 6.5 V2.5Z" fill="#333"/><path d="M6 9.5 V15" stroke="#333" stroke-width="1.2"/></svg>
<div class="t" style="left:1228px;top:578px;font-size:12px;color:#222;transform-origin:0 0;transform:rotate(-90deg)">属性</div>
<svg style="left:1227px;top:587px" width="15" height="15"><rect x="0.5" y="0.5" width="3" height="4" fill="#f5b800"/><rect x="5.5" y="0.5" width="3" height="4" fill="#c0141e"/><rect x="10.5" y="0.5" width="3" height="4" fill="#2ea836"/><path d="M0.5 7.5 H8" stroke="#222" stroke-width="0.9" stroke-dasharray="2 1"/><path d="M0.5 10.5 H8 M0.5 13 H8" stroke="#9ab6cf" stroke-width="0.9"/><path d="M10 14.5 V9 Q10 7 11.8 7 Q13.6 7 13.6 9 V14.5 M10 11.3 H13.6" stroke="#111" stroke-width="1.4" fill="none"/></svg>
<div class="a" style="left:1248px;top:165px;width:32px;height:32px;background:#f7f7f7"></div>
<svg style="left:1258px;top:176px" width="15" height="15"><rect x="0.5" y="0.5" width="3" height="4" fill="#f5b800"/><rect x="5.5" y="0.5" width="3" height="4" fill="#c0141e"/><rect x="10.5" y="0.5" width="3" height="4" fill="#2ea836"/><path d="M0.5 7.5 H8" stroke="#222" stroke-width="0.9" stroke-dasharray="2 1"/><path d="M0.5 10.5 H8 M0.5 13 H8" stroke="#9ab6cf" stroke-width="0.9"/><path d="M10 14.5 V9 Q10 7 11.8 7 Q13.6 7 13.6 9 V14.5 M10 11.3 H13.6" stroke="#111" stroke-width="1.4" fill="none"/></svg>
<div class="cb" style="left:959px;top:176px;width:251px;height:20px"></div>
<div class="cbd" style="left:1193px;top:177px;height:17px"></div>
<div class="chev" style="left:1197px;top:181px;width:5px;height:5px"></div>
<div class="t" style="left:962px;top:180px;font-size:12px;color:#333">无选择</div>
<div class="a" style="left:960px;top:202px;width:26px;height:25px;background:#fafafa;border:1px solid #e2e2e2;border-radius:2px"></div>
<div class="a" style="left:992px;top:202px;width:26px;height:25px;background:#fafafa;border:1px solid #e2e2e2;border-radius:2px"></div>
<div class="a" style="left:1025px;top:202px;width:26px;height:25px;background:#fafafa;border:1px solid #e2e2e2;border-radius:2px"></div>
<div class="a" style="left:1058px;top:202px;width:26px;height:25px;background:#fafafa;border:1px solid #e2e2e2;border-radius:2px"></div>
<div class="a" style="left:1091px;top:202px;width:26px;height:25px;background:#fafafa;border:1px solid #e2e2e2;border-radius:2px"></div>
<svg style="left:0;top:1px" width="1280" height="300"><rect x="963.5" y="206" width="19" height="18" fill="none" stroke="#8aa0b0" stroke-width="0.9" stroke-dasharray="2 1.5"/><circle cx="970" cy="217" r="4.5" fill="none" stroke="#1a8fe3" stroke-width="1.3"/><rect x="964.5" y="216.5" width="6" height="5.5" fill="none" stroke="#f5b800" stroke-width="1.3"/><path d="M972 208.5 Q978 207.5 978 212" stroke="#2ea836" stroke-width="1.4" fill="none"/><path d="M975.5 211.5 L978 214 L980.5 211.5Z" fill="#2ea836"/><path d="M997 206 V219 L1001 216 V208Z" fill="none" stroke="#8fb0cc" stroke-width="0.9"/><path d="M1002 207 L1011.5 215 L1007.5 215.5 L1010 220.5 L1008 221.5 L1005.5 216.5 L1002.5 219Z" fill="#fff" stroke="#222" stroke-width="1"/><rect x="1029.5" y="206.5" width="17" height="16" fill="none" stroke="#1a8fe3" stroke-width="1.1" stroke-dasharray="3 2"/><path d="M1035 209 L1043.5 216.5 L1040 217 L1042 221.5 L1040.3 222.3 L1038.3 217.8 L1035.5 220.2Z" fill="#fff" stroke="#222" stroke-width="1"/><path d="M1062.5 207.5 H1064.5 M1066 207.5 H1076 M1062.5 211 H1064.5 M1066 211 H1074 M1062.5 214.5 H1064.5 M1066 214.5 H1072" stroke="#1a8fe3" stroke-width="1.1"/><path d="M1077 213 L1071.5 219.5 H1074.5 L1072 224.5 L1078.5 217.5 H1075.5 L1078 213Z" fill="#f5b800" stroke="#333" stroke-width="0.7"/></svg>
<svg style="left:1100px;top:208px" width="9" height="15"><path d="M1.2 4 Q1.2 1 4.5 1 Q7.8 1 7.8 4 Q7.8 6 5.8 7.2 Q4.5 8 4.5 10" fill="none" stroke="#111" stroke-width="2"/><rect x="3.3" y="11.8" width="2.5" height="2.5" fill="#111"/></svg>
<svg style="left:1196px;top:239px" width="11" height="6"><path d="M0 5.5 L5.5 0 L11 5.5Z" fill="#222"/></svg>
<div class="a" style="left:1195px;top:252px;width:14px;height:183px;background:#c8c8c8"></div>
<svg style="left:1196px;top:583px" width="11" height="6"><path d="M0 0 L5.5 5.5 L11 0Z" fill="#222"/></svg>
<div class="a" style="left:959px;top:254px;width:225px;height:176px;background:#ececec;border-right:1px solid #e6e6e6"></div>
<div class="a" style="left:959px;top:455px;width:225px;height:103px;background:#ececec"></div>
<div class="a" style="left:959px;top:584px;width:225px;height:20px;background:#ececec"></div>
<div class="a" style="left:959px;top:235px;width:224px;height:20px;background:#dfe3fb;border:1px solid #b6bcd8"></div><div class="t" style="left:966px;top:239px;font-size:12px;font-weight:bold;color:#111">常规</div><svg style="left:1168px;top:242px" width="11" height="6"><path d="M0 5.5 L5.5 0 L11 5.5Z" fill="#111"/></svg>
<div class="a" style="left:959px;top:436px;width:224px;height:20px;background:#dfe3fb;border:1px solid #b6bcd8"></div><div class="t" style="left:966px;top:440px;font-size:12px;font-weight:bold;color:#111">打印样式</div><svg style="left:1168px;top:443px" width="11" height="6"><path d="M0 5.5 L5.5 0 L11 5.5Z" fill="#111"/></svg>
<div class="a" style="left:959px;top:565px;width:224px;height:20px;background:#dfe3fb;border:1px solid #b6bcd8"></div><div class="t" style="left:966px;top:569px;font-size:12px;font-weight:bold;color:#111">视图</div><svg style="left:1168px;top:572px" width="11" height="6"><path d="M0 5.5 L5.5 0 L11 5.5Z" fill="#111"/></svg>
<div class="t" style="left:969px;top:272px;font-size:12px;color:#333">线条色彩</div>
<div class="a" style="left:1075px;top:268px;width:108px;height:20px;background:#fff;border:1px solid #cfcfcf;border-right:2px solid #a9a9a9;border-bottom:2px solid #a9a9a9"></div>
<div class="cbd" style="left:1166px;top:269px;height:17px"></div>
<div class="chev" style="left:1171px;top:273px;width:5px;height:5px;border-color:#777"></div>
<div class="t" style="left:969px;top:294px;font-size:12px;color:#333">图层</div>
<div class="a" style="left:1075px;top:290px;width:108px;height:20px;background:#fff;border:1px solid #cfcfcf;border-right:2px solid #a9a9a9;border-bottom:2px solid #a9a9a9"></div>
<div class="cbd" style="left:1166px;top:291px;height:17px"></div>
<div class="chev" style="left:1171px;top:295px;width:5px;height:5px;border-color:#777"></div>
<div class="t" style="left:969px;top:316px;font-size:12px;color:#333">线条样式</div>
<div class="a" style="left:1075px;top:312px;width:108px;height:20px;background:#fff;border:1px solid #cfcfcf;border-right:2px solid #a9a9a9;border-bottom:2px solid #a9a9a9"></div>
<div class="cbd" style="left:1166px;top:313px;height:17px"></div>
<div class="chev" style="left:1171px;top:317px;width:5px;height:5px;border-color:#777"></div>
<div class="t" style="left:969px;top:340px;font-size:12px;color:#333">直线比例</div>
<div class="a" style="left:1075px;top:334px;width:108px;height:23px;background:#fff;border:1px solid #cfcfcf;border-right:2px solid #a9a9a9;border-bottom:2px solid #a9a9a9"></div>
<div class="t" style="left:969px;top:363px;font-size:12px;color:#333">线宽</div>
<div class="a" style="left:1075px;top:360px;width:108px;height:19px;background:#fff;border:1px solid #cfcfcf;border-right:2px solid #a9a9a9;border-bottom:2px solid #a9a9a9"></div>
<div class="cbd" style="left:1166px;top:361px;height:16px"></div>
<div class="chev" style="left:1171px;top:364px;width:5px;height:5px;border-color:#777"></div>
<div class="t" style="left:969px;top:387px;font-size:12px;color:#333">超链结</div>
<div class="a" style="left:1075px;top:381px;width:108px;height:22px;background:#fff;border:1px solid #cfcfcf;border-right:2px solid #a9a9a9;border-bottom:2px solid #a9a9a9"></div>
<div class="t" style="left:969px;top:412px;font-size:12px;color:#333">透明</div>
<div class="a" style="left:1075px;top:406px;width:108px;height:23px;background:#fff;border:1px solid #cfcfcf;border-right:2px solid #a9a9a9;border-bottom:2px solid #a9a9a9"></div>
<div class="t" style="left:969px;top:473px;font-size:12px;color:#333">样式</div>
<div class="a" style="left:1075px;top:469px;width:108px;height:20px;background:#efefef;border:1px solid #cfcfcf;border-right:2px solid #a9a9a9;border-bottom:2px solid #a9a9a9"></div>
<div class="cbd" style="left:1166px;top:470px;height:17px"></div>
<div class="chev" style="left:1171px;top:474px;width:5px;height:5px;border-color:#bbb"></div>
<div class="t" style="left:969px;top:495px;font-size:12px;color:#333">表格</div>
<div class="a" style="left:1075px;top:491px;width:108px;height:20px;background:#fff;border:1px solid #cfcfcf;border-right:2px solid #a9a9a9;border-bottom:2px solid #a9a9a9"></div>
<div class="cbd" style="left:1166px;top:492px;height:17px"></div>
<div class="chev" style="left:1171px;top:496px;width:5px;height:5px;border-color:#777"></div>
<div class="t" style="left:969px;top:518px;font-size:12px;color:#333">类型</div>
<div class="a" style="left:1075px;top:513px;width:108px;height:23px;background:#b3d1ee;border:1px solid #b3d1ee;border-right:2px solid #b3d1ee;border-bottom:2px solid #b3d1ee"></div>
<div class="t" style="left:969px;top:541px;font-size:12px;color:#333">显示(D)</div>
<div class="a" style="left:1075px;top:538px;width:108px;height:19px;background:#fff;border:1px solid #cfcfcf;border-right:2px solid #a9a9a9;border-bottom:2px solid #a9a9a9"></div>
<div class="cbd" style="left:1166px;top:539px;height:16px"></div>
<div class="chev" style="left:1171px;top:542px;width:5px;height:5px;border-color:#777"></div>
<div class="t" style="left:1098px;top:272px;font-size:12px;color:#111">ByLayer</div>
<div class="t" style="left:1078px;top:294px;font-size:12px;color:#111">0</div>
<div class="t" style="left:1078px;top:316px;font-size:12px;color:#111">ByLayer</div>
<div class="t" style="left:1078px;top:340px;font-size:12px;color:#111">1</div>
<div class="t" style="left:1115px;top:363px;font-size:12px;color:#111">ByLayer</div>
<div class="t" style="left:1078px;top:412px;font-size:12px;color:#111">ByLayer</div>
<div class="t" style="left:1078px;top:495px;font-size:12px;color:#111">无</div>
<div class="t" style="left:1078px;top:518px;font-size:12px;color:#111">无</div>
<div class="t" style="left:1078px;top:541px;font-size:12px;color:#111">否</div>
<div class="t" style="left:1140px;top:316px;font-size:12px;color:#111">Solid</div>
<svg style="left:1082px;top:272px" width="12" height="12"><circle cx="6" cy="6" r="4.8" fill="none" stroke="#333" stroke-width="1"/></svg>
<div class="a" style="left:1079px;top:369px;width:33px;height:1px;background:#111"></div>
<div class="a" style="left:0;top:607px;width:1280px;height:27px;background:#c0c0c0;border-top:2px solid #8c8c8c;border-bottom:2px solid #8c8c8c"></div>
<div class="t" style="left:5px;top:616px;font-size:12px;font-weight:bold;color:#111">指令窗口</div>
<svg style="left:1240px;top:616px" width="12" height="11" viewBox="0 0 10 10"><path d="M3 3 V1 H9 V6 H7" fill="none" stroke="#111" stroke-width="1.3"/><rect x="1" y="3.5" width="6" height="5.5" fill="none" stroke="#111" stroke-width="1.3"/></svg>
<svg style="left:1263px;top:616px" width="10" height="10"><path d="M1 1 L9 9 M9 1 L1 9" stroke="#111" stroke-width="1.4"/></svg>
<div class="a" style="left:0;top:634px;width:1280px;height:70px;background:#fff;border-left:1px solid #a8a8a8;border-right:1px solid #a8a8a8;border-bottom:1px solid #a8a8a8"></div>
<div class="a" style="left:0;top:704px;width:1280px;height:16px;background:#fff"></div>
<div class="t" style="left:4px;top:707px;font-size:12px;color:#111">:</div>
<div class="a" style="left:0;top:720px;width:1280px;height:31px;background:#f0f0f0"></div>
<div class="t" style="left:2px;top:730px;font-size:12.5px;color:#555;transform-origin:0 0;transform:scaleX(0.93)">CorelCAD 2023™ x64</div>
<div class="a" style="left:250px;top:726px;width:38px;height:21px;background:#fdfdfd;border:1px solid #dcdcdc;border-radius:2px;text-align:center;line-height:21px;font-size:12px;color:#333;white-space:nowrap">锁点</div>
<div class="a" style="left:294px;top:726px;width:38px;height:21px;background:#fdfdfd;border:1px solid #dcdcdc;border-radius:2px;text-align:center;line-height:21px;font-size:12px;color:#333;white-space:nowrap">网格</div>
<div class="a" style="left:340px;top:726px;width:38px;height:21px;background:#fdfdfd;border:1px solid #dcdcdc;border-radius:2px;text-align:center;line-height:21px;font-size:12px;color:#333;white-space:nowrap">正交</div>
<div class="a" style="left:386px;top:726px;width:39px;height:21px;background:#cde4f7;border:1px solid #7da7d9;border-radius:2px;text-align:center;line-height:21px;font-size:12px;color:#333;white-space:nowrap">极性</div>
<div class="a" style="left:431px;top:726px;width:63px;height:21px;background:#cde4f7;border:1px solid #7da7d9;border-radius:2px;text-align:center;line-height:21px;font-size:12px;color:#333;white-space:nowrap">图元抓取</div>
<div class="a" style="left:500px;top:726px;width:62px;height:21px;background:#cde4f7;border:1px solid #7da7d9;border-radius:2px;text-align:center;line-height:21px;font-size:12px;color:#333;white-space:nowrap">图元追踪</div>
<div class="a" style="left:569px;top:726px;width:63px;height:21px;background:#cde4f7;border:1px solid #7da7d9;border-radius:2px;text-align:center;line-height:21px;font-size:12px;color:#333;white-space:nowrap">快速输入</div>
<div class="a" style="left:638px;top:726px;width:62px;height:21px;background:#cde4f7;border:1px solid #7da7d9;border-radius:2px;text-align:center;line-height:21px;font-size:12px;color:#333;white-space:nowrap">循环选择</div>
<div class="a" style="left:708px;top:726px;width:37px;height:21px;background:#fdfdfd;border:1px solid #dcdcdc;border-radius:2px;text-align:center;line-height:21px;font-size:12px;color:#333;white-space:nowrap">线宽</div>
<div class="a" style="left:752px;top:726px;width:39px;height:21px;background:#cde4f7;border:1px solid #7da7d9;border-radius:2px;text-align:center;line-height:21px;font-size:12px;color:#333;white-space:nowrap">模型</div>
<div class="a" style="left:798px;top:726px;width:64px;height:21px;background:#cde4f7;border:1px solid #7da7d9;border-radius:2px;text-align:center;line-height:21px;font-size:12px;color:#333;white-space:nowrap">动态 CCS</div>
<div class="a" style="left:870px;top:726px;width:65px;height:21px;background:#fdfdfd;border:1px solid #dcdcdc;border-radius:2px;text-align:center;line-height:21px;font-size:12px;color:#333;white-space:nowrap">AMonitor</div>
<div class="a" style="left:944px;top:726px;width:62px;height:21px;background:#fdfdfd;border:1px solid #dcdcdc;border-radius:2px"></div>
<div class="t" style="left:949px;top:731px;font-size:12px;color:#333">注记</div>
<svg style="left:988px;top:733px" width="13" height="8"><path d="M0 0 H13 L6.5 7.5Z" fill="#111"/></svg>
<div class="t" style="left:1013px;top:731px;font-size:12px;color:#555;transform-origin:0 0;transform:scaleX(0.8)">(1:1)</div>
<div class="t" style="left:1040px;top:731px;font-size:12px;color:#555;transform-origin:0 0;transform:scaleX(0.965)">(504.25,73.6,0)</div>
<div class="a" style="left:0;top:751px;width:1280px;height:7px;background:#d5e4ef;border-top:1px solid #c9d0d6"></div>
<div class="a" style="left:841px;top:755px;width:37px;height:4px;background:#e8b4b2;border-radius:4px 4px 0 0"></div>
<div class="a" style="left:1068px;top:755px;width:42px;height:4px;background:#eef3f6;border-radius:4px 4px 0 0"></div>
</body></html>
